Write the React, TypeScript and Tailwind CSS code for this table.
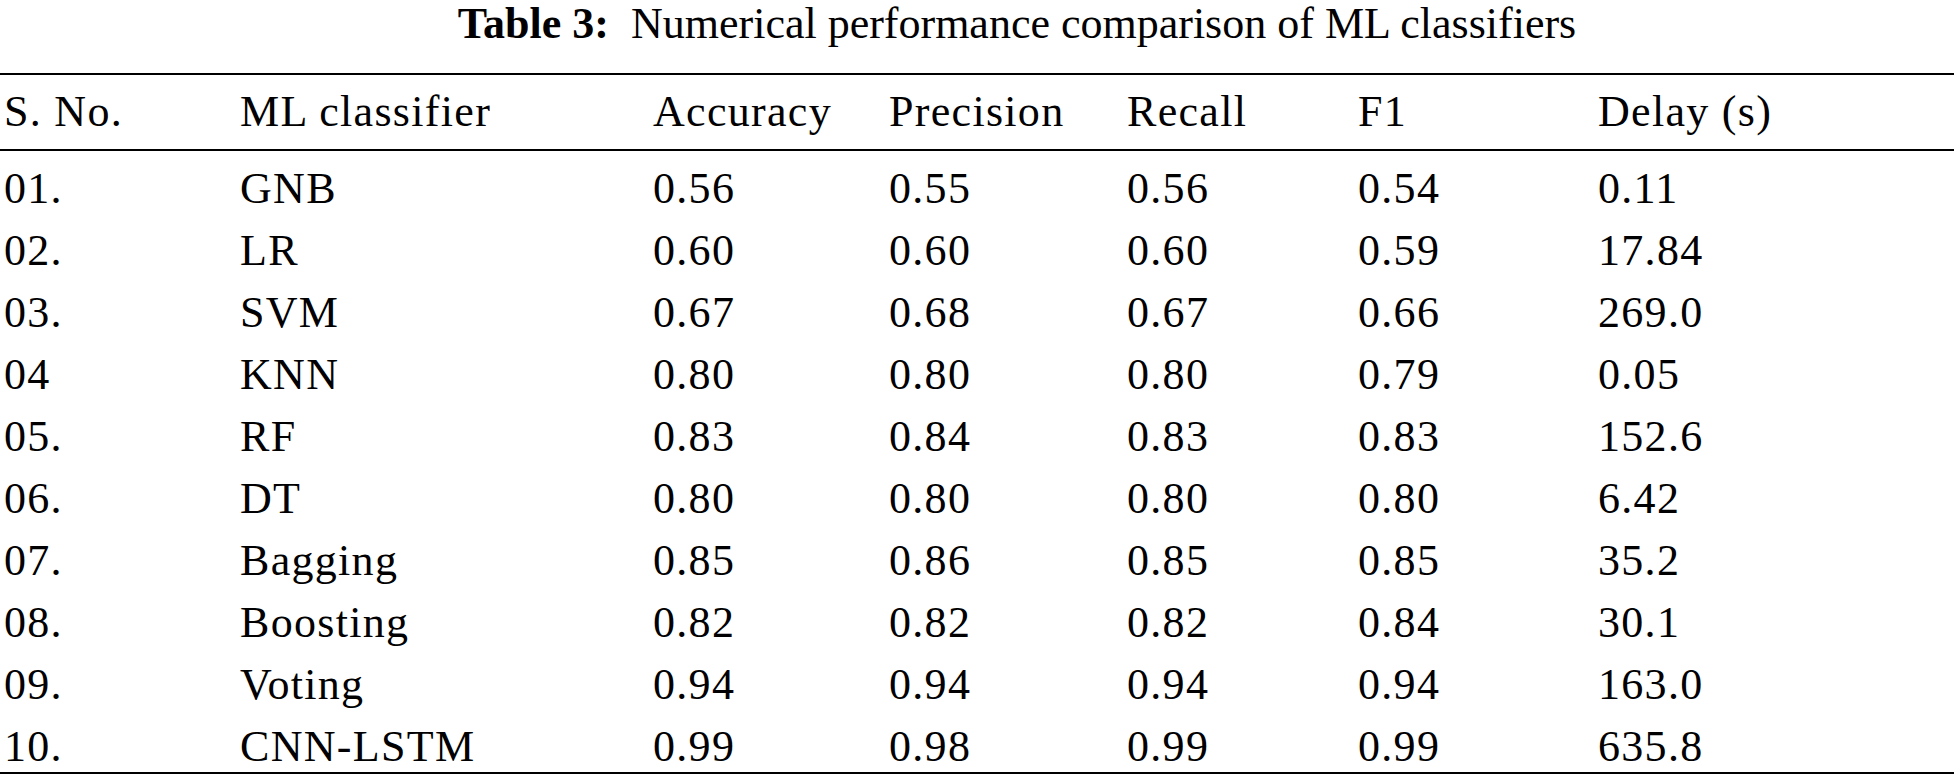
import React from 'react';

const rows = [
  ['01.', 'GNB', '0.56', '0.55', '0.56', '0.54', '0.11'],
  ['02.', 'LR', '0.60', '0.60', '0.60', '0.59', '17.84'],
  ['03.', 'SVM', '0.67', '0.68', '0.67', '0.66', '269.0'],
  ['04', 'KNN', '0.80', '0.80', '0.80', '0.79', '0.05'],
  ['05.', 'RF', '0.83', '0.84', '0.83', '0.83', '152.6'],
  ['06.', 'DT', '0.80', '0.80', '0.80', '0.80', '6.42'],
  ['07.', 'Bagging', '0.85', '0.86', '0.85', '0.85', '35.2'],
  ['08.', 'Boosting', '0.82', '0.82', '0.82', '0.84', '30.1'],
  ['09.', 'Voting', '0.94', '0.94', '0.94', '0.94', '163.0'],
  ['10.', 'CNN-LSTM', '0.99', '0.98', '0.99', '0.99', '635.8'],
];

const headers = ['S. No.', 'ML classifier', 'Accuracy', 'Precision', 'Recall', 'F1', 'Delay (s)'];

export default function App() {
  return (
    <div className="w-[1954px] h-[779px] bg-white text-black font-['Liberation_Serif',serif] text-[44px] overflow-hidden">
      {/* Caption */}
      <div className="h-[73px] pl-[80px] text-center leading-[48px]">
        <span className="font-bold">Table 3:</span>
        <span className="ml-[22px]">Numerical performance comparison of ML classifiers</span>
      </div>

      <table className="w-full table-fixed border-collapse tracking-[1.3px]">
        <colgroup>
          <col className="w-[240px]" />
          <col className="w-[413px]" />
          <col className="w-[236px]" />
          <col className="w-[238px]" />
          <col className="w-[231px]" />
          <col className="w-[240px]" />
          <col />
        </colgroup>
        <thead>
          <tr className="border-t-2 border-b-2 border-black h-[76px]">
            {headers.map((h, i) => (
              <th key={h} className={`font-normal text-left align-top pt-[13px] leading-[48px] ${i === 0 ? 'pl-[4px]' : ''}`}>
                {h}
              </th>
            ))}
          </tr>
        </thead>
        <tbody className="border-b-2 border-black">
          {rows.map((r) => (
            <tr key={r[0]} className="h-[61.7px]">
              {r.map((c, i) => (
                <td key={i} className={`align-top pt-[14px] leading-[48px] ${i === 0 ? 'pl-[4px]' : ''}`}>
                  {c}
                </td>
              ))}
            </tr>
          ))}
          <tr className="h-[2px]"><td colSpan={7} /></tr>
        </tbody>
      </table>
    </div>
  );
}
